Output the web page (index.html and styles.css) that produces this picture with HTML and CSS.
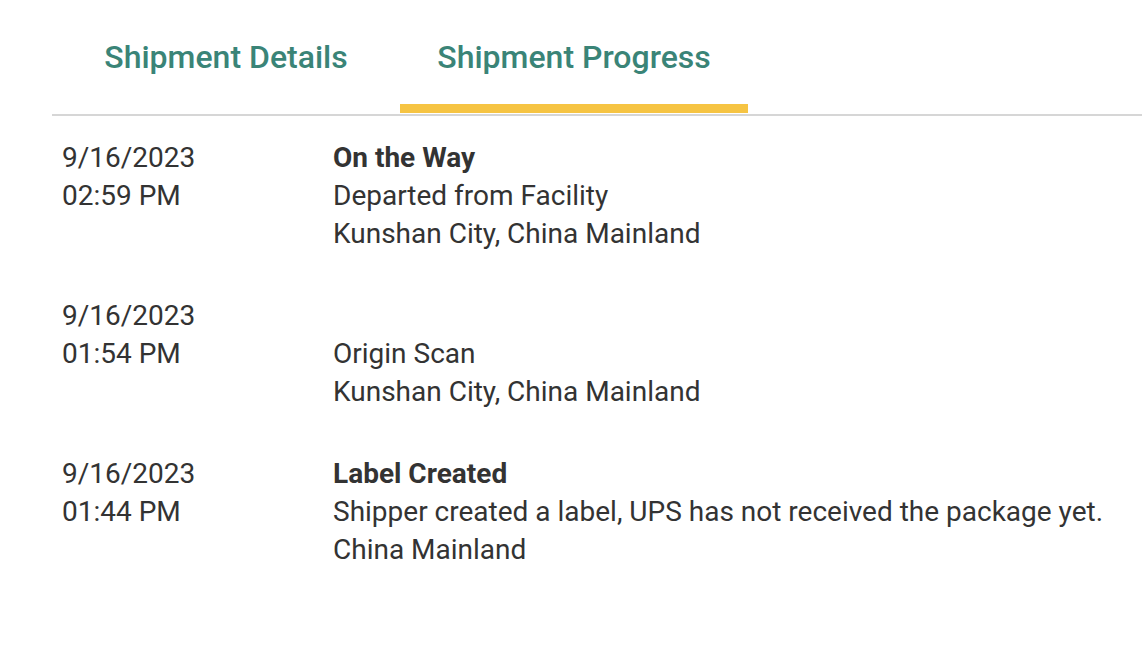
FILE: index.html
```html
<!DOCTYPE html>
<html lang="en">
<head>
  <meta charset="UTF-8">
  <title>Shipment Progress</title>
  <link rel="stylesheet" href="styles.css">
</head>
<body>
  <div class="panel">
    <ul class="tabs">
      <li class="tab">Shipment Details</li>
      <li class="tab active">Shipment Progress</li>
    </ul>

    <div class="progress">
      <div class="row">
        <div class="when">9/16/2023<br>02:59 PM</div>
        <div class="what">
          <div class="status">On the Way</div>
          <div>Departed from Facility</div>
          <div>Kunshan City, China Mainland</div>
        </div>
      </div>
      <div class="row">
        <div class="when">9/16/2023<br>01:54 PM</div>
        <div class="what">
          <div class="status"></div>
          <div>Origin Scan</div>
          <div>Kunshan City, China Mainland</div>
        </div>
      </div>
      <div class="row">
        <div class="when">9/16/2023<br>01:44 PM</div>
        <div class="what">
          <div class="status">Label Created</div>
          <div>Shipper created a label, UPS has not received the package yet.</div>
          <div>China Mainland</div>
        </div>
      </div>
    </div>
  </div>
</body>
</html>
```

FILE: styles.css
```css
body {
  margin: 0;
  background: #fff;
  font-family: Roboto, "Liberation Sans", sans-serif;
  color: #333;
}

.panel {
  padding-left: 52px;
}

.tabs {
  display: flex;
  margin: 0;
  padding: 0;
  list-style: none;
  border-bottom: 2px solid #d6d6d6;
}

.tab {
  width: 348px;
  padding: 38px 0 28px;
  border-bottom: 9px solid transparent;
  margin-bottom: 1px;
  text-align: center;
  font-size: 32px;
  line-height: 38px;
  font-weight: 500;
  color: #3a8477;
  cursor: pointer;
}

.tab.active {
  border-bottom-color: #f6c443;
}

.progress {
  padding: 23px 0 0 10px;
}

.row {
  display: flex;
  margin-bottom: 44px;
  font-size: 28px;
  line-height: 38px;
}

.when {
  width: 271px;
  flex-shrink: 0;
}

.status {
  font-weight: 700;
  min-height: 38px;
}
```
